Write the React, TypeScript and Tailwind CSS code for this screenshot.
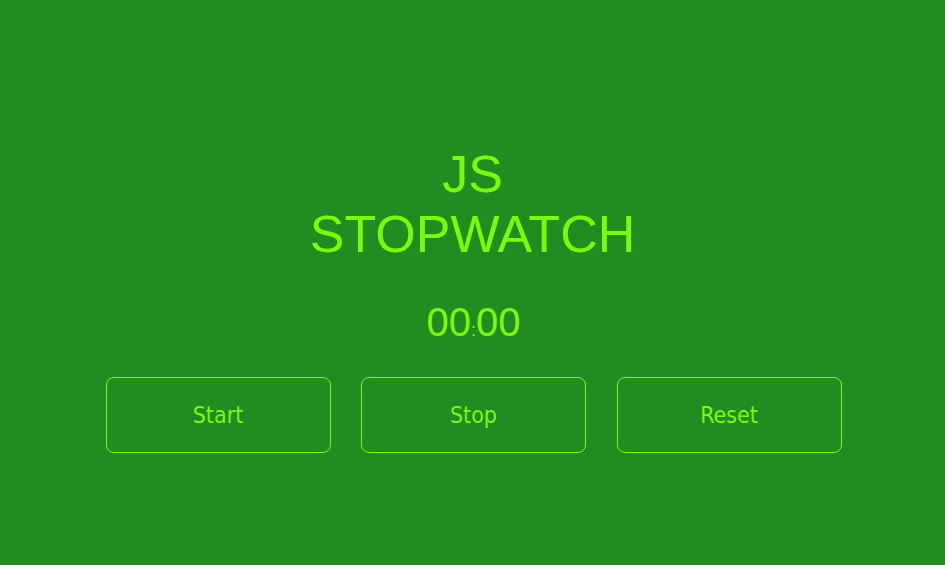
import React from 'react';

const App: React.FC = () => {
  return (
    <div className="min-h-[565px] bg-[#228b22] text-[#7cfc00] flex flex-col items-center pt-[144px] font-['Liberation_Sans',Arial,sans-serif]">
      {/* 제목 */}
      <h1 className="text-[52px] leading-[60px] text-center font-normal">
        JS
        <br />
        STOPWATCH
      </h1>

      {/* 타이머 */}
      <div className="mt-[35px] text-[40px] leading-[46px] pl-[2px]">
        <span>00</span>
        <span className="text-[18px]">:</span>
        <span>00</span>
      </div>

      {/* 버튼 */}
      <div className="mt-[24px] flex gap-[30.5px] pl-[2px]">
        {['Start', 'Stop', 'Reset'].map((label) => (
          <button
            key={label}
            className="w-[225px] h-[76px] border border-[#7cfc00] rounded-lg text-[23px] bg-transparent font-['DejaVu_Sans_Condensed','DejaVu_Sans',sans-serif] [font-stretch:condensed]"
          >
            {label}
          </button>
        ))}
      </div>
    </div>
  );
};

export default App;
